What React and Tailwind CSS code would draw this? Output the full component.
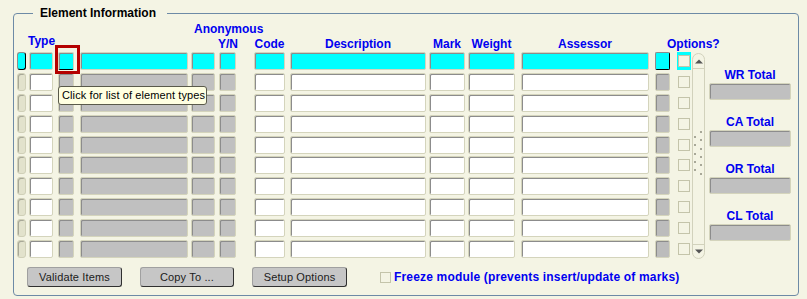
const field = 'h-[18px] shrink-0 rounded-[2px] border border-[#d4d4bc] shadow-[inset_1px_1px_0_#8c8c8c]'
const white = 'bg-white'
const gray = 'bg-[#c0c0c0]'
const cyan = 'bg-[#00ffff]'

const cols = [
  { key: 'type', cls: 'ml-[3px] w-[24px]', fill: white },
  { key: 'elbtn', cls: 'ml-[5px] w-[16px]', fill: gray },
  { key: 'name', cls: 'ml-[6px] w-[108px]', fill: gray },
  { key: 'anon', cls: 'ml-[3px] w-[24px]', fill: gray },
  { key: 'yn', cls: 'ml-[4px] w-[17px]', fill: gray },
  { key: 'code', cls: 'ml-[18px] w-[31px]', fill: white },
  { key: 'desc', cls: 'ml-[5px] w-[136px]', fill: white },
  { key: 'mark', cls: 'ml-[3px] w-[36px]', fill: white },
  { key: 'weight', cls: 'ml-[3px] w-[47px]', fill: white },
  { key: 'assessor', cls: 'ml-[6px] w-[128px]', fill: white },
]

function Row({ active }) {
  return (
    <div className="flex items-center">
      <div
        className={
          active
            ? 'ml-[3px] h-[18px] w-[9px] shrink-0 rounded-[3px] bg-[#00ffff] border border-[#8c8c8c] border-r-black border-b-black'
            : 'ml-[3px] h-[18px] w-[9px] shrink-0 rounded-[3px] bg-[#e2e2cc] border border-[#d0d0b8] shadow-[inset_1px_1px_0_#a8a898]'
        }
      />
      {cols.map((c) => (
        <div
          key={c.key}
          className={`${field} ${c.cls} ${active ? cyan : c.fill} ${
            active && c.key === 'elbtn' ? 'border-b-black' : ''
          }`}
        />
      ))}
      <div
        className={
          active
            ? 'ml-[6px] h-[18px] w-[15px] shrink-0 rounded-[2px] bg-[#00ffff] border border-[#8c8c8c] border-r-black border-b-black'
            : 'ml-[6px] h-[18px] w-[15px] shrink-0 rounded-[2px] bg-[#bcbcbc] border border-[#d4d4bc] shadow-[inset_1px_1px_0_#8c8c8c]'
        }
      />
      <div
        className={`ml-[7px] h-[18px] w-[14px] shrink-0 flex items-center pl-[1px] ${active ? 'bg-[#00ffff]' : ''}`}
      >
        <div className="h-[12px] w-[12px] border border-[#c4c4aa] bg-[#f4f4e4]" />
      </div>
    </div>
  )
}

function Total({ label }) {
  return (
    <div className="flex flex-col">
      <div className="text-center text-[12px] leading-[14px] font-bold text-[#0000f0]">{label}</div>
      <div className="mt-[1px] h-[17px] rounded-[2px] bg-[#c0c0c0] border border-[#d4d4bc] shadow-[inset_1px_1px_0_#8c8c8c]" />
    </div>
  )
}

function Button({ label, w }) {
  return (
    <div
      className={`${w} h-[20px] flex items-center justify-center rounded-[3px] bg-[#c6c6c6] border border-[#a0a0a0] border-r-[#303030] border-b-[#303030] text-[11px] tracking-[0.15px] text-[#202020]`}
    >
      {label}
    </div>
  )
}

function Scrollbar() {
  const left = [135, 143, 152, 160, 168]
  const right = [130, 138, 147, 155, 163, 172]
  return (
    <div className="ml-[1px] mt-[39px] h-[206px] w-[13px] shrink-0 flex flex-col rounded-[7px] border border-[#d2d2bc]">
      <div className="h-[15px] flex items-center justify-center border-b border-[#d2d2bc]">
        <svg width="8" height="5" viewBox="0 0 8 5">
          <path d="M0 4.5 L4 0.5 L8 4.5 Z" fill="#555" />
        </svg>
      </div>
      <div className="flex-1 flex justify-center">
        <svg width="9" height="48" viewBox="0 0 9 48" className="mt-[61px]">
          {left.map((y) => (
            <rect key={'l' + y} x="0" y={y - 129} width="2" height="2" fill="#a8a898" />
          ))}
          {right.map((y) => (
            <rect key={'r' + y} x="6" y={y - 129} width="2" height="2" fill="#a8a898" />
          ))}
        </svg>
      </div>
      <div className="h-[14px] flex items-center justify-center border-t border-[#d2d2bc]">
        <svg width="8" height="5" viewBox="0 0 8 5">
          <path d="M0 0.5 L8 0.5 L4 4.5 Z" fill="#555" />
        </svg>
      </div>
    </div>
  )
}

export default function App() {
  return (
    <div className="relative w-[807px] h-[299px] overflow-hidden bg-[#f4f4e4] pt-[13px] pl-[13px] font-['Liberation_Sans',Arial,sans-serif]">
      <div className="relative w-[786px] h-[283px] rounded-[4px] border border-[#6d8aa6]">
        <div className="absolute left-[19px] top-[-8px] bg-[#f4f4e4] pl-[7px] pr-[11px] text-[12px] leading-[14px] font-bold text-black">
          Element Information
        </div>

        <div className="flex">
          <div className="w-[677px] shrink-0 flex flex-col">
            <div className="h-[38px] flex items-start text-[12px] leading-[14px] font-bold text-[#0000f0] whitespace-nowrap">
              <div className="shrink-0 ml-[14px] mt-[20px] w-[27px] text-center">Type</div>
              <div className="shrink-0 ml-[136px] w-[63px] flex flex-col">
                <div className="mt-[8px] pl-[3px]">Anonymous</div>
                <div className="mt-[1px] pl-[27px]">Y/N</div>
              </div>
              <div className="shrink-0 mt-[23px] w-[31px] text-center">Code</div>
              <div className="shrink-0 mt-[23px] ml-[5px] w-[136px] text-center">Description</div>
              <div className="shrink-0 mt-[23px] ml-[3px] w-[36px] text-center">Mark</div>
              <div className="shrink-0 mt-[23px] ml-[3px] w-[47px] text-center">Weight</div>
              <div className="shrink-0 mt-[23px] ml-[6px] w-[128px] text-center">Assessor</div>
              <div className="shrink-0 mt-[23px] ml-[18px]">Options?</div>
            </div>

            <div className="flex flex-col gap-[2.9px]">
              {Array.from({ length: 10 }, (_, i) => (
                <Row key={i} active={i === 0} />
              ))}
            </div>

            <div className="mt-[9px] flex items-center">
              <div className="ml-[13px] shrink-0">
                <Button label="Validate Items" w="w-[95px]" />
              </div>
              <div className="ml-[18px] shrink-0">
                <Button label="Copy To ..." w="w-[94px]" />
              </div>
              <div className="ml-[18px] shrink-0">
                <Button label="Setup Options" w="w-[95px]" />
              </div>
              <div className="ml-[33px] h-[11px] w-[11px] shrink-0 border border-[#c4c4aa] bg-[#f4f4e4]" />
              <div className="ml-[3px] shrink-0 text-[12px] leading-[14px] font-bold tracking-[0.17px] text-[#0000f0] whitespace-nowrap">
                Freeze module (prevents insert/update of marks)
              </div>
            </div>
          </div>

          <Scrollbar />

          <div className="ml-[4px] mt-[54px] w-[82px] shrink-0 flex flex-col gap-[15px]">
            <Total label="WR Total" />
            <Total label="CA Total" />
            <Total label="OR Total" />
            <Total label="CL Total" />
          </div>
        </div>
      </div>

      <div className="absolute left-[55px] top-[45px] w-[25px] h-[29px] border-[3px] border-[#b40000]" />
      <div className="absolute left-[58px] top-[86px] h-[19px] w-[149px] pl-[3px] flex items-center rounded-[3px] border border-[#5a5a4a] bg-[#ffffe1] text-[11px] tracking-[0.1px] text-black whitespace-nowrap">
        Click for list of element types
      </div>
    </div>
  )
}
